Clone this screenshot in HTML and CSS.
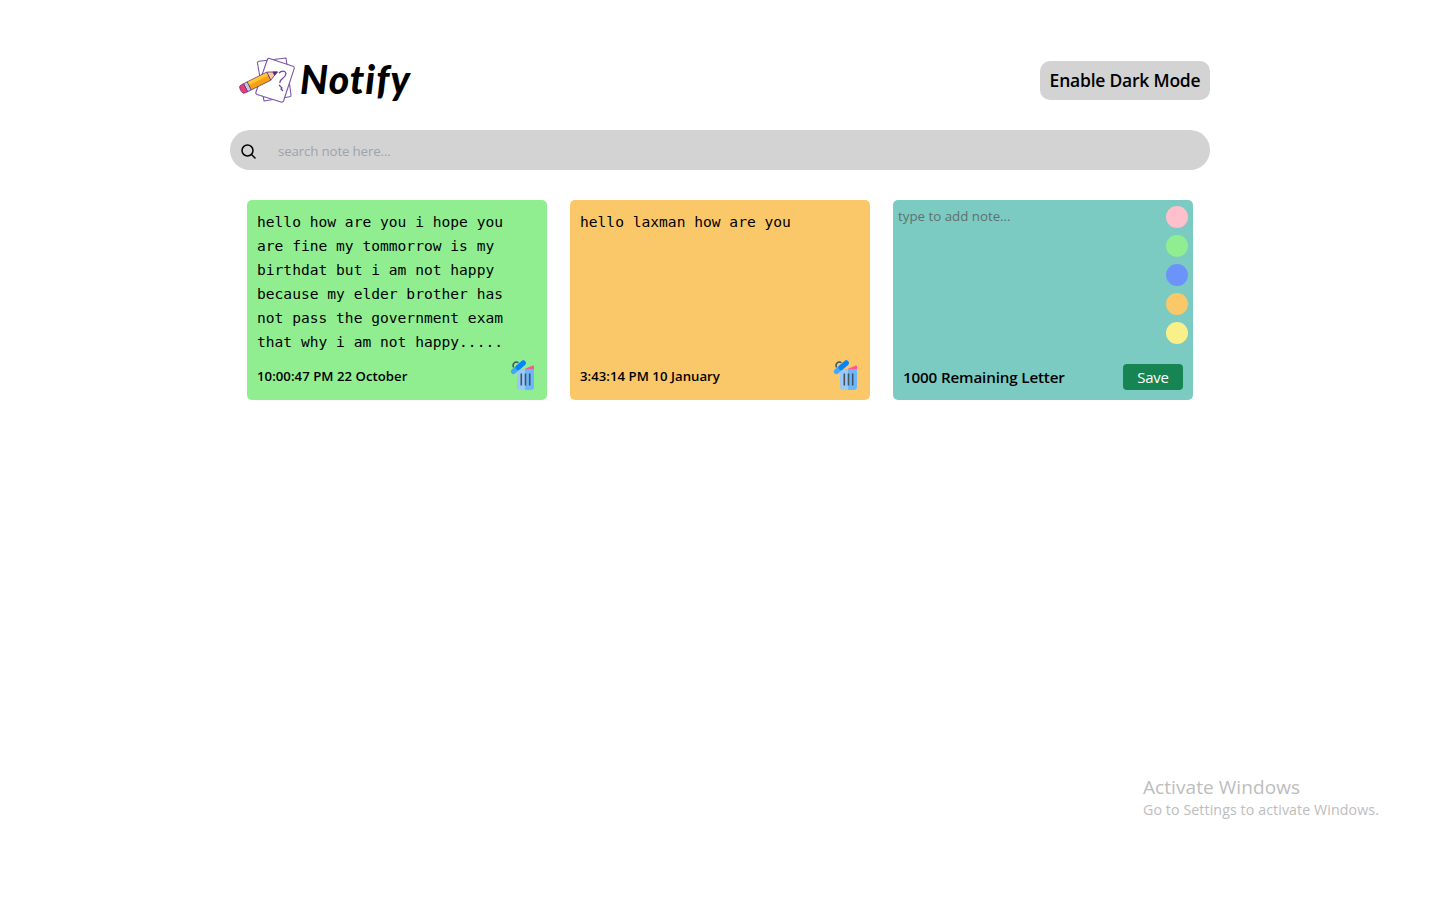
FILE: index.html
```html
<!DOCTYPE html>
<html lang="en">
<head>
<meta charset="utf-8">
<title>Notify</title>
<link rel="stylesheet" href="styles.css">
</head>
<body>
<svg class="sprite" aria-hidden="true">
  <symbol id="trash" viewBox="0 0 30 32">
    <path d="M5.600 7.500C3.800 4 7 .800 10.500 2.600" fill="none" stroke="#42555e" stroke-width="1.500"/>
    <path d="M17 8.700L25 5.500q1-.2 1 .8v3.400H16.500z" fill="#ff5590"/>
    <path d="M8.800 9.200H26v17.500q0 3.300-3.300 3.300h-10.200q-3 0-3.100-3z" fill="#6bb6fc"/>
    <path d="M8.800 9.200H17V30h-4.500q-3 0-3.100-3z" fill="#9bcafa"/>
    <path d="M5.400 11.500L15.300 3" stroke="#42a7fb" stroke-width="5" stroke-linecap="round"/>
    <path d="M10 7.500L15.300 3" stroke="#0784fa" stroke-width="5" stroke-linecap="round"/>
    <path d="M13.300 13.500v12M17.500 13.500v12M21.700 13.500v12" stroke="#42555e" stroke-width="1.600"/>
  </symbol>
</svg>
<main class="app">
  <header class="header">
    <div class="brand">
      <svg class="brand-mark" viewBox="0 0 60 56">
        <g fill="#fff" stroke="#7856ab" stroke-width="1.100" stroke-linejoin="round">
          <path d="M21.500 10q0-1.500 1.500-1.700L50 5l5 37q.2 1.500-1.300 1.700L28 48z"/>
          <path d="M31.500 6.300q.5-1.200 2-.8L57 13.300q1.700.6 1.200 2.300L47.500 48q-.7 1.500-2.500 1L21 41.500q-1.500-.6-1.200-2z"/>
        </g>
        <path d="M43 20c4-4 9-1 6 3-2 3-6 4-5 7m-1 2l3 3-1 1 2 2" fill="none" stroke="#6943a0" stroke-width="1.200"/>
        <g transform="translate(6 36.500) rotate(-26.500)" stroke="#533181" stroke-width=".7" stroke-linejoin="round">
          <path d="M8 -4.500h22v9H8z" fill="#f6a313"/>
          <path d="M8 -4h22v3.200H8z" fill="#ffc62f" stroke="none"/>
          <path d="M30 -4.500L39.500 0 30 4.500z" fill="#f7c89d"/>
          <path d="M35.500 -1.900L39.500 0l-4 1.900z" fill="#4d287b"/>
          <path d="M4 -4.500h4v9H4z" fill="#c9c7dd"/>
          <path d="M4 -4.500H1.500q-3 0-3 3v3q0 3 3 3H4z" fill="#f23a73"/>
        </g>
      </svg>
      <h1 class="brand-name">Notify</h1>
    </div>
    <button class="mode">Enable Dark Mode</button>
  </header>
  <div class="search">
    <svg class="search-icon" viewBox="0 0 16 16" fill="none" stroke="#000" stroke-width="1.500"><circle cx="6.500" cy="6.500" r="5.500"/><path d="M10.500 10.500l4 4"/></svg>
    <span class="search-hint">search note here...</span>
  </div>
  <section class="notes">
    <article class="note green">
      <p class="text">hello how are you i hope you are fine my tommorrow is my birthdat but i am not happy because my elder brother has not pass the government exam that why i am not happy.....</p>
      <footer class="foot"><span class="date">10:00:47 PM 22 October</span><svg class="bin"><use href="#trash"/></svg></footer>
    </article>
    <article class="note orange">
      <p class="text">hello laxman how are you</p>
      <footer class="foot"><span class="date">3:43:14 PM 10 January</span><svg class="bin"><use href="#trash"/></svg></footer>
    </article>
    <article class="note teal">
      <div class="compose">
        <span class="compose-hint">type to add note...</span>
        <div class="swatches"><i class="dot pink"></i><i class="dot green"></i><i class="dot blue"></i><i class="dot orange"></i><i class="dot yellow"></i></div>
      </div>
      <footer class="foot save-row"><span class="count">1000 Remaining Letter</span><button class="save">Save</button></footer>
    </article>
  </section>
</main>
<aside class="watermark"><div class="wm-title">Activate Windows</div><div class="wm-text">Go to Settings to activate Windows.</div></aside>
</body>
</html>
```
FILE: styles.css
```css
* { box-sizing: border-box; }
body { margin: 0; min-height: 900px; background: #fff; color: #000; font-family: "Open Sans", "Noto Sans", sans-serif; }
h1, p { margin: 0; }
button { border: 0; padding: 0; font-family: inherit; color: inherit; white-space: nowrap; }
.sprite { position: absolute; width: 0; height: 0; }
.app { width: 980px; margin: 0 auto; padding-top: 50px; }
.header { display: flex; justify-content: space-between; align-items: center; height: 60px; padding-left: 6px; }
.brand { display: flex; align-items: center; }
.brand-mark { width: 60px; height: 56px; margin-top: 2px; }
.brand-name { margin: -3px 0 0 4px; font: italic 900 39px/60px Lato, sans-serif; font-variant-ligatures: none; letter-spacing: 1.1px; }
.mode { width: 170px; height: 39px; margin-top: 1px; padding-bottom: 2px; border-radius: 10px; background: #d3d3d3; font-size: 17.500px; font-weight: 600; letter-spacing: -.22px; }
.search { display: flex; align-items: center; height: 40px; margin-top: 20px; padding-left: 11px; border-radius: 20px; background: #d3d3d3; }
.search-icon { width: 16px; height: 16px; margin-top: 3px; }
.search-hint { margin: 2px 0 0 21px; font-size: 13.300px; letter-spacing: -.15px; color: #9ca3af; }
.notes { display: flex; gap: 23px; padding: 30px 17px 0; }
.note { display: flex; flex-direction: column; justify-content: space-between; width: 300px; height: 200px; border-radius: 5px; }
.green { background: #90ee90; }
.orange { background: #fac869; }
.teal { background: #7ccbc3; }
.pink { background: #ffc0cb; }
.blue { background: #6b93fa; }
.yellow { background: #faf08a; }
.text { padding: 10px 30px 0 10px; font: 14.600px/24px "DejaVu Sans Mono", monospace; }
.foot { display: flex; flex: none; justify-content: space-between; align-items: center; height: 46px; padding: 0 9px 0 10px; }
.date { margin-bottom: 2px; font-size: 13.200px; font-weight: 600; letter-spacing: .03px; }
.bin { width: 30px; height: 32px; margin-bottom: 3px; }
.compose { display: flex; justify-content: space-between; padding: 6px 5px 0; }
.compose-hint { font-size: 13.300px; line-height: 20px; color: #5f706e; }
.swatches { display: flex; flex-direction: column; gap: 7px; }
.dot { width: 22px; height: 22px; border-radius: 50%; }
.save-row { padding-right: 10px; }
.count { font-size: 15.200px; font-weight: 600; letter-spacing: -.15px; }
.save { width: 60px; height: 26px; border-radius: 4px; background: #178553; color: #fff; font-size: 15px; letter-spacing: -.3px; }
.watermark { position: absolute; left: 1143px; top: 774px; color: #bdbdbd; white-space: nowrap; }
.wm-title { font-size: 19px; line-height: 26px; letter-spacing: .07px; }
.wm-text { font-size: 14.200px; line-height: 20px; letter-spacing: .1px; }
```
